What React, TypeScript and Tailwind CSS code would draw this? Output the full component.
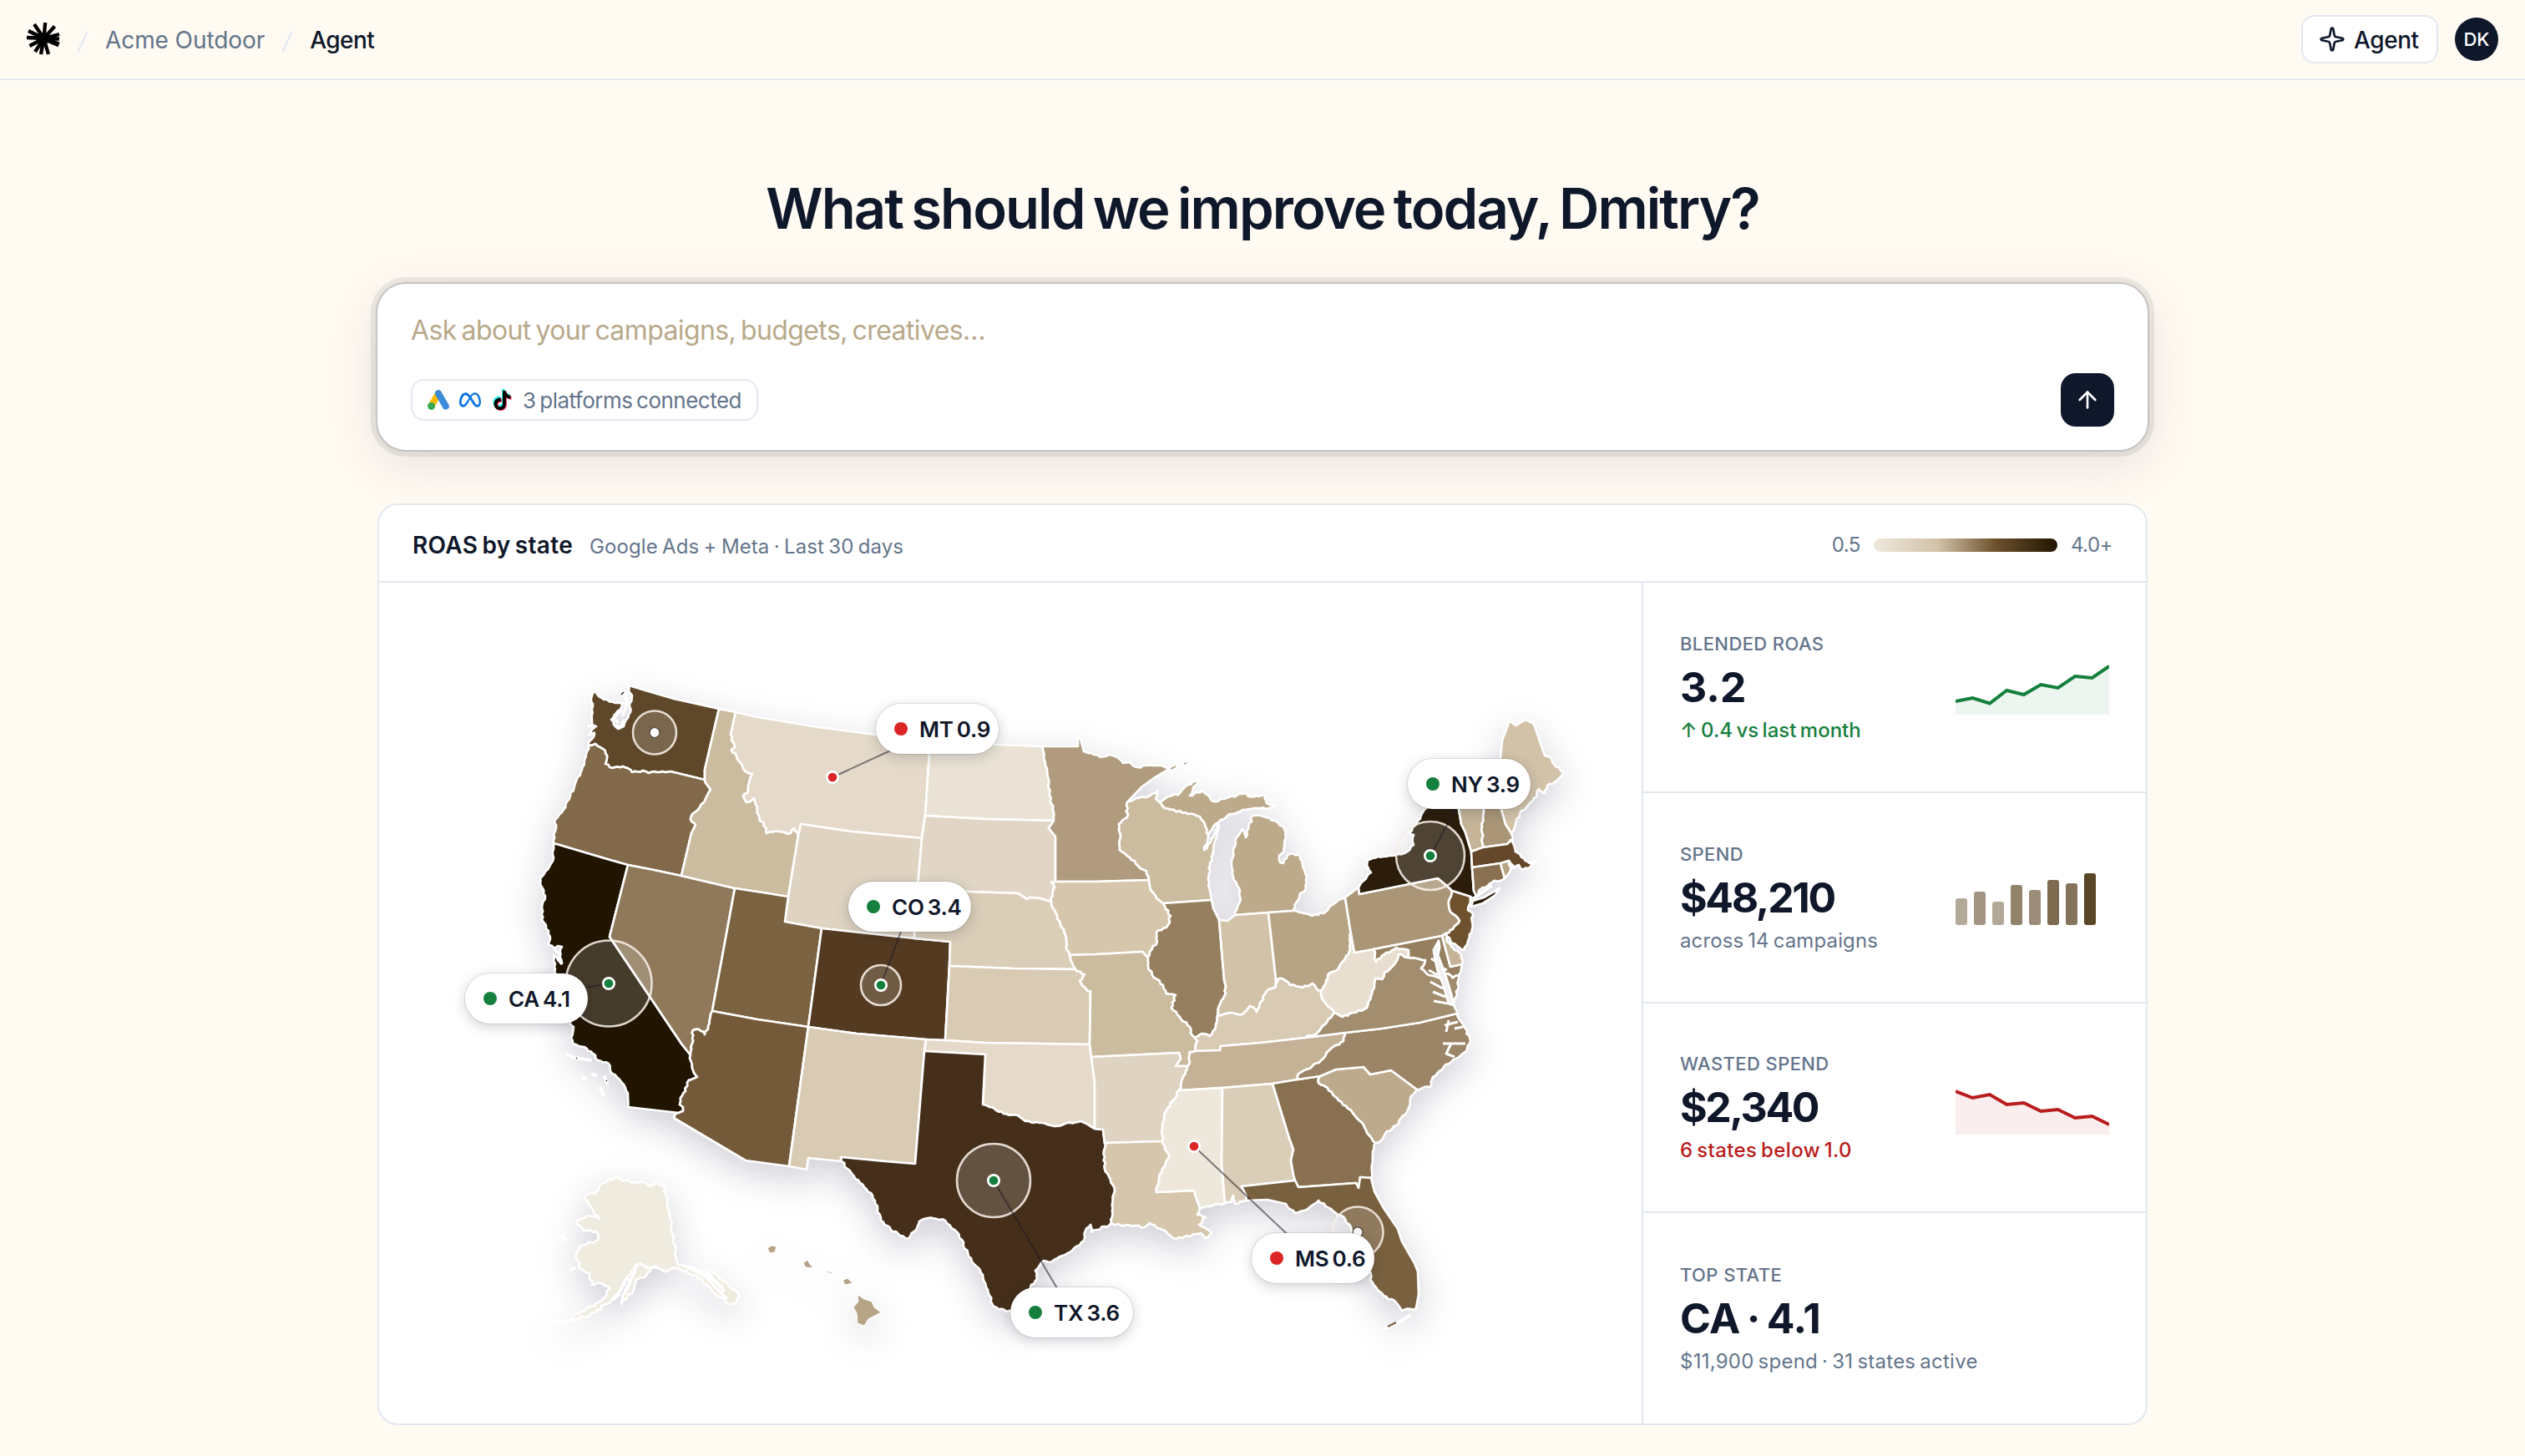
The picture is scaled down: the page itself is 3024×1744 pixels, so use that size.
import { ArrowUp, Sparkle } from "lucide-react";
import { SiMeta, SiTiktok } from "react-icons/si";

type Point = [number, number];

// Border segments between states. A leading "~" marks a river or a coast line.
const ARCS: Record<string, string> = {
  waSea:
    "~753,821 753,828 757,833 754,843 755,853 750,862 747,870 740,873 735,868 732,862 743,850 746,842 737,842 727,838 717,834 711,828 708,837 710,843 709,867 714,870 707,877 712,879 707,887 705,893",
  waOr: "~705,893 713,891 722,897 727,905 725,915 733,920 746,918 755,922 757,925 770,923 777,926 787,925 803,924",
  waOr2: "803,924 844,934",
  waId: "861,849 844,922 844,934",
  waNorth: "753,821 773,827 807,837 861,849",
  orSea: "~705,893 703,900 697,922 683,953 673,973 664,985 666,992 663,1000 663,1010",
  orCa: "663,1010 690,1018 727,1029 752,1036",
  orNv: "752,1036 783,1042 816,1049",
  orId: "~844,934 846,939 851,946 845,957 838,967 832,973 827,981 833,988 828,998",
  orId2: "828,998 816,1049",
  idNorth: "861,849 881,853",
  idMt1: "881,853 875,880",
  idMt: "~875,880 880,895 876,898 882,905 888,915 893,924 901,927 897,938 895,950 890,953 894,961 903,956 907,970 910,983 915,986 918,998 927,996 940,997 947,998 951,992 956,1001",
  idWy: "956,1001 944,1074",
  idUt: "944,1074 913,1069 880,1064",
  idNv: "880,1064 816,1049",
  caSea:
    "~663,1010 663,1027 658,1038 647,1052 647,1058 653,1073 649,1088 649,1102 657,1115 659,1125 657,1132 664,1136 668,1133 673,1134 671,1142 673,1154 667,1147 663,1144 664,1158 666,1167 676,1190 683,1227 687,1230 684,1243 686,1250 700,1254 710,1262 716,1270 729,1274 731,1283 742,1293 749,1303 752,1313 752,1326",
  caSouth: "752,1326 813,1333",
  caAz: "~813,1333 818,1331 818,1326 814,1323 815,1315 821,1307 823,1297 828,1293 835,1290 830,1282 828,1272 826,1267 827,1264",
  caNv: "752,1036 730,1122 816,1250 827,1264",
  nvUt: "880,1064 853,1211",
  nvAz: "~853,1211 848,1233 844,1239 837,1233 830,1234 829,1250 827,1264",
  utWy: "944,1074 940,1104 984,1112",
  utCo: "984,1112 968,1230",
  utAz: "853,1211 907,1221 968,1230",
  azNm: "968,1230 945,1397",
  azSouth: "813,1333 809,1334 807,1339 893,1390 945,1397",
  nmSouth: "945,1397 966,1401 968,1387 1008,1391",
  nmTx: "1008,1391 1007,1386 1060,1391 1096,1394 1107,1259",
  nmOk: "1107,1259 1109,1245",
  nmCo: "968,1230 1026,1238 1109,1245",
  coWy: "984,1112 1030,1117 1095,1124",
  coNe: "1095,1124 1138,1128 1137,1157",
  coKs: "1137,1157 1132,1246",
  coOk: "1109,1245 1132,1246",
  mtWy: "956,1001 959,987 1020,996 1104,1004",
  wySd: "1104,1004 1099,1063",
  wyNe: "1099,1063 1095,1124",
  mtNorth: "881,853 907,859 980,871 1048,880 1115,886",
  mtNd: "1115,886 1113,903 1108,977",
  mtSd: "1108,977 1104,1004",
  ndNorth: "1115,886 1193,892 1249,894",
  ndMn: "~1249,894 1252,917 1256,933 1257,953 1262,973 1262,983",
  ndSd: "1108,977 1180,981 1262,983",
  sdMn: "1262,983 1256,992 1264,1002 1264,1056",
  sdIa: "~1264,1056 1259,1057 1263,1063 1259,1080",
  sdNe: "1099,1063 1160,1068 1219,1070 1230,1077 1233,1075 1245,1076 1259,1080",
  neIa: "~1259,1080 1263,1090 1270,1107 1277,1123 1278,1138 1281,1144",
  neMo: "~1281,1144 1284,1153 1288,1161",
  neKs: "1137,1157 1213,1160 1288,1161",
  ksMo: "~1288,1161 1299,1167 1293,1175 1301,1185 1306,1187",
  ksMo2: "1306,1187 1305,1251",
  ksOk: "1132,1246 1180,1249 1305,1251",
  okMo: "1305,1251 1307,1266",
  okAr: "1307,1266 1311,1297 1311,1352",
  okTx1: "1107,1259 1180,1263 1177,1323",
  okTx: "~1177,1323 1185,1326 1193,1330 1202,1334 1219,1336 1228,1343 1245,1345 1265,1349 1278,1345 1294,1343 1306,1349 1311,1352",
  txAr: "1311,1352 1321,1353 1323,1369",
  txLa: "~1323,1369 1323,1400 1330,1413 1335,1427 1332,1443 1332,1458 1329,1467",
  txSea:
    "~1329,1467 1314,1473 1307,1476 1306,1467 1300,1474 1298,1486 1284,1498 1256,1512 1250,1510 1245,1516 1240,1522 1242,1532 1234,1542 1228,1560 1222,1575 1212,1572",
  txMex:
    "~1008,1391 1015,1400 1030,1417 1045,1432 1051,1448 1055,1462 1067,1473 1087,1484 1095,1475 1101,1463 1111,1459 1132,1462 1143,1473 1152,1485 1160,1505 1177,1527 1183,1545 1190,1565 1212,1572",
  mnNorth:
    "1249,894 1291,894 1291,884 1294,885 1298,900",
  mnNorth2: "~1298,900 1310,904 1318,907 1328,904 1338,907 1345,914 1353,913 1362,919 1373,917 1385,917 1402,920",
  mnLake: "1402,920 1382,932 1368,942 1350,961",
  mnWi: "~1350,961 1350,979 1340,987 1342,1000 1341,1018 1353,1027 1363,1037 1373,1043 1376,1054",
  mnIa: "1264,1056 1313,1056 1376,1054",
  wiLake: "~1350,961 1364,956 1377,953 1387,947 1384,957 1390,962",
  wiMi: "~1390,962 1395,968 1423,975 1437,978 1443,987 1447,1000",
  wiSea: "~1447,1000 1446,1008 1442,1018 1450,1009 1455,998 1459,985 1460,990 1456,1005 1453,1020 1449,1037 1447,1053 1451,1078",
  wiIl: "1451,1078 1393,1082",
  wiIa: "~1376,1054 1379,1067 1388,1078 1393,1082",
  iaIl: "~1393,1082 1402,1097 1399,1108 1385,1117 1386,1128 1377,1140 1375,1147",
  iaMo: "1281,1144 1313,1143 1368,1140 1375,1147",
  moIl: "~1375,1147 1375,1157 1380,1168 1393,1180 1397,1190 1408,1192 1403,1207 1413,1218 1425,1230 1428,1240 1431,1243",
  ilKy: "~1431,1243 1440,1238 1449,1241 1456,1230 1458,1217",
  ilIn: "1460,1102 1466,1173",
  ilIn2: "~1466,1173 1468,1190 1460,1205 1458,1217",
  ilLake: "1451,1078 1453,1088 1460,1102",
  inLake: "1460,1102 1470,1103 1479,1096",
  inMi: "1479,1096 1519,1093",
  inOh: "1519,1093 1528,1173 1528,1182",
  inKy: "~1458,1217 1473,1213 1488,1215 1497,1205 1505,1212 1510,1200 1517,1187 1528,1182",
  miSea:
    "~1479,1096 1485,1080 1485,1067 1477,1050 1475,1037 1477,1017 1481,1003 1488,993 1492,1003 1495,993 1500,977 1510,977 1527,983 1537,990 1540,1003 1538,1020 1532,1025 1533,1033 1537,1034 1542,1024 1555,1023 1560,1035 1565,1050 1564,1065 1557,1070 1553,1080 1548,1091",
  miOh: "1519,1093 1548,1091",
  miUpper:
    "~1390,962 1395,957 1413,950 1423,940 1435,933 1425,953 1440,947 1453,960 1472,955 1492,950 1495,954 1515,953 1517,962 1528,965 1520,968 1502,968 1488,970 1470,977 1462,982 1453,990 1447,1000",
  ohLake: "~1548,1091 1558,1093 1572,1097 1588,1092 1597,1083 1611,1075",
  ohPa: "1611,1075 1617,1113",
  ohWv: "~1617,1113 1617,1123 1616,1140 1607,1153 1600,1163 1590,1168 1588,1178 1582,1187",
  ohKy: "~1528,1182 1530,1173 1537,1173 1545,1180 1560,1183 1572,1178 1577,1185 1582,1187",
  paLake: "1611,1075 1627,1063",
  paNy: "1627,1063 1628,1071 1722,1052 1728,1057 1735,1063 1739,1067",
  paNj: "~1739,1067 1735,1080 1737,1092 1748,1103 1740,1113 1732,1118",
  paDe: "1732,1118 1727,1121",
  paMd: "1727,1121 1645,1137",
  paWv: "1645,1137 1622,1141 1617,1113",
  nyLake:
    "~1627,1063 1642,1045 1637,1037 1638,1030 1650,1026 1667,1025 1682,1022 1693,1012 1693,1000 1688,997 1698,983 1708,968 1720,957 1745,951",
  nyVt: "1745,951 1747,969 1750,987 1755,997 1762,1020",
  nyMa: "1762,1020 1763,1039",
  nyCt: "1763,1039 1765,1067 1768,1073",
  nySea: "1768,1073 1764,1076 1761,1074",
  nyNj: "1739,1067 1761,1074",
  njSea: "~1761,1074 1760,1083 1758,1090 1763,1093 1763,1113 1758,1127 1753,1138 1745,1133 1737,1127 1732,1118",
  deSea: "~1732,1118 1733,1128 1742,1138 1750,1143 1751,1155",
  deMd: "1727,1121 1737,1158 1751,1155",
  mdSea: "~1751,1155 1750,1160 1747,1168",
  mdVa: "~1747,1168 1740,1171 1734,1166 1727,1172 1712,1168 1702,1160 1707,1150 1697,1148 1686,1147",
  mdWv: "~1645,1137 1648,1152 1658,1143 1672,1135 1687,1138 1686,1147",
  wvVa: "~1686,1147 1675,1143 1672,1152 1665,1160 1658,1165 1655,1173 1647,1172 1643,1190 1637,1207 1620,1213 1608,1218 1598,1213",
  wvKy: "~1582,1187 1583,1195 1590,1205 1598,1213",
  kyVa: "~1598,1213 1587,1227 1577,1238 1563,1243",
  kyTn: "1431,1259 1461,1258 1462,1253 1510,1249 1563,1243",
  kyMo: "~1431,1243 1434,1247 1431,1259",
  moTn: "~1431,1259 1425,1260 1425,1272 1422,1277",
  vaTn: "1563,1243 1611,1237",
  vaNc: "1611,1237 1655,1232 1700,1225 1745,1214",
  vaSea: "~1747,1168 1746,1185 1741,1201 1738,1190 1734,1196 1742,1205 1745,1214",
  ncSea: "~1745,1214 1755,1232 1761,1247 1755,1260 1744,1268 1729,1278 1716,1290 1713,1302 1697,1305",
  ncSc: "1697,1305 1666,1282 1641,1287 1633,1278 1600,1281 1581,1289",
  ncGa: "1581,1289 1554,1293",
  ncTn: "~1611,1237 1609,1247 1592,1258 1585,1268 1572,1277 1562,1282 1554,1288 1554,1293",
  tnGa: "1554,1293 1524,1298",
  tnAl: "1524,1298 1464,1303",
  tnMs: "1464,1303 1412,1306",
  tnAr: "~1422,1277 1416,1292 1412,1306",
  moAr: "1307,1266 1412,1261 1414,1268 1408,1277 1422,1277",
  arMs: "~1412,1306 1401,1325 1395,1333 1392,1348 1392,1367",
  arLa: "1323,1369 1392,1367",
  laMs: "~1392,1367 1395,1373 1400,1387 1392,1400 1388,1413 1385,1428",
  laMs2: "1385,1428 1430,1426 1432,1433 1437,1447",
  laSea:
    "~1437,1447 1434,1455 1444,1458 1436,1467 1451,1477 1444,1483 1438,1477 1416,1483 1405,1483 1392,1473 1377,1465 1371,1470 1349,1467 1329,1467",
  msSea: "~1437,1447 1449,1445 1467,1441",
  msAl: "1464,1303 1463,1393 1467,1441",
  alSea: "~1467,1441 1475,1440 1477,1432 1479,1442 1492,1438",
  alFl: "1492,1438 1493,1433 1487,1421 1551,1414",
  alGa: "1524,1298 1544,1363 1549,1377 1546,1390 1549,1407 1551,1414",
  gaFl: "1551,1414 1555,1422 1624,1417 1627,1423 1629,1410 1642,1411",
  gaSc: "~1581,1289 1579,1297 1590,1303 1603,1318 1620,1333 1633,1347 1640,1360 1647,1369",
  gaSea: "~1647,1369 1644,1383 1642,1411",
  scSea: "~1697,1305 1690,1313 1685,1332 1672,1348 1659,1358 1653,1367 1647,1369",
  flEast: "1642,1411 1646,1427 1657,1447 1674,1472 1679,1487 1694,1513 1698,1523 1699,1550 1696,1567",
  flWest:
    "~1696,1567 1679,1570 1672,1560 1657,1552 1648,1542 1641,1533 1641,1523 1630,1505 1620,1485 1618,1470 1611,1460 1594,1448 1579,1438 1562,1450 1551,1453 1540,1442",
  flPan: "1540,1442 1518,1437 1492,1438",
  vtTop: "1745,951 1776,948",
  vtNh: "~1776,948 1777,970 1775,990 1776,1015",
  vtMa: "1762,1020 1776,1015",
  nhTop: "1776,948 1790,942",
  nhMa: "1776,1015 1805,1011",
  nhMe: "1790,942 1798,969 1803,987 1810,998",
  nhSea: "1810,998 1812,1005 1805,1011",
  meTop: "1790,942 1797,907",
  meLand: "1797,907 1799,887 1808,863 1815,869 1827,862 1837,867 1850,905",
  meSea:
    "~1850,905 1858,908 1863,918 1873,925 1865,935 1853,941 1850,950 1843,945 1840,955 1833,961 1820,975 1815,987 1810,998",
  maSea: "~1805,1011 1809,1006 1813,1012 1815,1020 1825,1028 1832,1034 1839,1031 1833,1038 1824,1042 1819,1036 1813,1040 1807,1031",
  maCt: "1763,1039 1797,1034",
  maRi: "1797,1034 1807,1031",
  ctRi: "1797,1034 1802,1052",
  ctSea: "~1802,1052 1787,1057 1773,1065 1768,1073",
  riSea: "~1807,1031 1809,1043 1802,1052",
};

const STATES: [fill: string, arcs: string][] = [
  ["#5f4829", "waSea waOr waOr2 waId waNorth"],
  ["#82694a", "orSea orCa orNv orId2 orId waOr2 waOr"],
  ["#211500", "caSea caSouth caAz caNv orCa"],
  ["#8f795a", "caNv nvAz nvUt idNv orNv"],
  ["#cbbb9f", "idNorth idMt1 idMt idWy idUt idNv orId2 orId waId"],
  ["#e5dac9", "mtNorth mtNd mtSd mtWy idMt idMt1"],
  ["#dfd3c1", "mtWy wySd wyNe coWy utWy idWy"],
  ["#7b6240", "idUt utWy utCo utAz nvUt"],
  ["#543a20", "coWy coNe coKs coOk nmCo utCo"],
  ["#745a39", "utAz azNm azSouth caAz nvAz"],
  ["#d8cab3", "nmCo nmOk nmTx nmSouth azNm"],
  ["#eae3d5", "ndNorth ndMn ndSd mtNd"],
  ["#e1d6c5", "ndSd sdMn sdIa sdNe wySd mtSd"],
  ["#dbceb8", "sdNe neIa neMo neKs coNe wyNe"],
  ["#d8cab3", "neKs ksMo ksMo2 ksOk coKs"],
  ["#e5dac9", "coOk ksOk okMo okAr okTx okTx1 nmOk"],
  ["#452f1a", "okTx1 okTx txAr txLa txSea txMex nmTx"],
  ["#b09b7e", "mnNorth mnNorth2 mnLake mnWi mnIa sdMn ndMn"],
  ["#d5c6ac", "mnIa wiIa iaIl iaMo neIa sdIa"],
  ["#cbbb9f", "iaMo moIl kyMo moTn moAr okMo ksMo2 ksMo neMo"],
  ["#dfd3c1", "moAr tnAr arMs arLa txAr okAr"],
  ["#d5c6ac", "arLa laMs laMs2 laSea txLa"],
  ["#cbbb9f", "wiLake wiMi wiSea wiIl wiIa mnWi"],
  ["#bdaa8a", "miUpper wiMi"],
  ["#bdaa8a", "miSea miOh inMi"],
  ["#957f5f", "wiIl ilLake ilIn ilIn2 ilKy moIl iaIl"],
  ["#d2c2a8", "inLake inMi inOh inKy ilIn2 ilIn"],
  ["#b7a485", "miOh ohLake ohPa ohWv ohKy inOh"],
  ["#d8cab3", "inKy ohKy wvKy kyVa kyTn kyMo ilKy"],
  ["#c5b196", "kyTn vaTn ncTn tnGa tnAl tnMs tnAr moTn"],
  ["#eee8dc", "tnMs msAl msSea laMs2 laMs arMs"],
  ["#dbceb8", "tnAl alGa alFl alSea msAl"],
  ["#897050", "tnGa ncGa gaSc gaSea gaFl alGa"],
  ["#79603e", "alFl gaFl flEast flWest flPan"],
  ["#bdaa8d", "ncSc scSea gaSc"],
  ["#9c8467", "vaNc ncSea ncSc ncGa ncTn"],
  ["#a28d6f", "wvVa mdVa vaSea vaNc vaTn kyVa"],
  ["#e8dfd0", "paWv mdWv wvVa wvKy ohWv"],
  ["#aa9677", "paLake paNy paNj paDe paMd paWv ohPa"],
  ["#957f5f", "paMd deMd mdSea mdVa mdWv"],
  ["#c5b498", "paDe deSea deMd"],
  ["#2c1d0b", "nyLake nyVt nyMa nyCt nySea nyNj paNy"],
  ["#6e522e", "nyNj njSea paNj"],
  ["#c5b498", "vtTop vtNh vtMa nyVt"],
  ["#aa9677", "nhTop nhMe nhSea nhMa vtNh"],
  ["#d2c2a8", "meTop meLand meSea nhMe"],
  ["#65482a", "vtMa nhMa maSea maRi maCt nyMa"],
  ["#897050", "maCt ctRi ctSea nyCt"],
  ["#b7a485", "maRi riSea ctRi"],
];

const ALASKA =
  "740,1411 757,1417 768,1416 781,1420 788,1418 794,1420 797,1430 812,1515 822,1517 839,1525 850,1520 860,1530 874,1542 885,1550 882,1560 874,1562 861,1553 848,1540 835,1528 811,1519 796,1523 783,1518 774,1528 761,1533 758,1546 750,1556 744,1562 748,1545 756,1530 764,1514 752,1528 744,1545 736,1556 726,1562 713,1572 692,1580 682,1581 690,1574 709,1565 722,1556 731,1543 718,1537 709,1539 706,1525 695,1520 690,1503 696,1492 716,1485 714,1475 698,1473 690,1463 703,1456 718,1460 709,1448 700,1435 703,1430 713,1430 718,1420 731,1413";

const HAWAII = [
  "919,1495 924,1492 930,1493 928,1500 922,1501",
  "967,1509 970,1514 974,1519 965,1518 962,1513",
  "988,1523 994,1523 1000,1525 993,1525",
  "995,1532 998,1533 997,1535",
  "1005,1529 1009,1534 1015,1531 1021,1537 1012,1539 1010,1535",
  "1027,1551 1035,1556 1044,1559 1047,1566 1055,1572 1040,1580 1035,1588 1027,1585 1026,1573 1022,1566 1028,1559",
];

const ISLANDS = [
  "679,1263 686,1266",
  "688,1267 694,1268",
  "697,1268 707,1270",
  "698,1291 701,1292",
  "710,1287 713,1288",
  "724,1290 727,1297",
  "719,1303 723,1311",
  "744,829 747,832",
  "672,1480 678,1485",
  "683,1521 688,1519",
  "658,1588 668,1584 678,1583",
  "1660,1591 1672,1586 1688,1576",
];

// Narrow water with shores on both sides, drawn as plain white strokes
const INLETS =
  "M744 826L750 838L749 850L745 858M745 850L735 860L741 866M748 862L742 872L736 868M750 830L752 846M664 1138L671 1143L669 1150L673 1155M703 870L711 869M704 880L713 878M818 1516L832 1522L846 1530L858 1543L871 1556M826 1517L842 1524L856 1534L868 1547M846 1521L856 1534L866 1542M766 1513L776 1519L788 1517M750 1530L743 1546L732 1558M760 1522L754 1538L748 1550M1787 1061L1773 1070L1766 1076";

const parse = (text: string) =>
  text
    .replace("~", "")
    .split(" ")
    .map((pair) => pair.split(",").map(Number) as Point);

const noise = (x: number, y: number) => {
  const n = Math.sin(x * 12.9898 + y * 78.233) * 43758.5453;
  return n - Math.floor(n) - 0.5;
};

// Breaks every segment in short steps and shifts them a little sideways
const roughen = (points: Point[], amount: number) => {
  const result: Point[] = [points[0]];
  for (let i = 1; i < points.length; i++) {
    const [ax, ay] = points[i - 1];
    const [bx, by] = points[i];
    const length = Math.hypot(bx - ax, by - ay);
    const steps = Math.max(1, Math.round(length / 3.5));
    for (let s = 1; s < steps; s++) {
      const x = ax + ((bx - ax) * s) / steps;
      const y = ay + ((by - ay) * s) / steps;
      const shift = noise(x, y) * amount;
      result.push([x - ((by - ay) / length) * shift, y + ((bx - ax) / length) * shift]);
    }
    result.push([bx, by]);
  }
  return result;
};

const toPath = (points: Point[]) =>
  "M" + points.map(([x, y]) => `${x.toFixed(1)} ${y.toFixed(1)}`).join("L") + "Z";

const arcPoints = Object.fromEntries(
  Object.entries(ARCS).map(([name, text]) => [
    name,
    text.startsWith("~") ? roughen(parse(text), 2.6) : parse(text),
  ])
);

const gap = (a: Point, b: Point) => Math.hypot(a[0] - b[0], a[1] - b[1]);

const ringPath = (names: string) => {
  const list = names.split(" ").map((name) => arcPoints[name]);
  const ring: Point[] = [];
  list.forEach((points, i) => {
    const first = points[0];
    const last = points[points.length - 1];
    let reversed = false;
    if (i === 0) {
      const next = list[1];
      const ends = [next[0], next[next.length - 1]];
      const fromFirst = Math.min(...ends.map((end) => gap(first, end)));
      const fromLast = Math.min(...ends.map((end) => gap(last, end)));
      reversed = list.length > 2 && fromFirst < fromLast;
    } else {
      const tail = ring[ring.length - 1];
      reversed = gap(tail, last) < gap(tail, first);
    }
    ring.push(...(reversed ? [...points].reverse() : points));
  });
  return toPath(ring);
};

const statePaths = STATES.map(([fill, arcs]) => ({ fill, d: ringPath(arcs) }));

const BUBBLES = [
  { x: 784, y: 877.5, r: 26 },
  { x: 729, y: 1178, r: 51.5 },
  { x: 1055, y: 1180, r: 24 },
  { x: 1190, y: 1414, r: 44 },
  { x: 1713, y: 1025, r: 41 },
  { x: 1626, y: 1476, r: 30.5 },
];

const PINS = [
  { label: "MT 0.9", good: false, x: 997, y: 931, place: "left-[595px] top-[145px]", px: 1123, py: 873 },
  { label: "CO 3.4", good: true, x: 1055, y: 1180, place: "left-[562px] top-[358px]", px: 1090, py: 1086 },
  { label: "CA 4.1", good: true, x: 729, y: 1178, place: "left-[103px] top-[468px]", px: 630, py: 1196 },
  { label: "NY 3.9", good: true, x: 1713, y: 1025, place: "left-[1232px] top-[211px]", px: 1760, py: 939 },
  { label: "TX 3.6", good: true, x: 1190, y: 1414, place: "left-[756px] top-[844px]", px: 1283, py: 1572 },
  { label: "MS 0.6", good: false, x: 1430, y: 1373, place: "left-[1045px] top-[779px]", px: 1572, py: 1507 },
];

const UsMap = () => {
  return (
    <svg viewBox="454 698 1512 1007" className="block w-full h-full">
      <g
        className="[filter:drop-shadow(0_14px_20px_rgba(30,20,60,0.2))]"
        stroke="#ffffff"
        strokeWidth="2.7"
        strokeLinejoin="round">
        {statePaths.map(({ fill, d }, i) => (
          <path key={i} d={d} fill={fill} />
        ))}
        <path d={toPath(roughen([...parse(ALASKA), [740, 1411]], 3.4))} fill="#f0ebdf" />
        <path d="M1762 1086L1764 1079L1777 1075L1796 1064L1790 1073L1776 1082Z" fill="#2c1d0b" />
        {ISLANDS.map((line) => (
          <polyline key={line} points={line} fill="none" strokeWidth="4" strokeLinecap="round" />
        ))}
        {HAWAII.map((island) => (
          <polygon key={island} points={island} fill="#b7a485" strokeWidth="1" />
        ))}
      </g>
      <path d={INLETS} fill="none" stroke="#ffffff" strokeWidth="3.5" strokeLinejoin="round" />
      {/* bays and sounds */}
      <g fill="#f1eff3" stroke="#ffffff" strokeWidth="3" strokeLinejoin="round">
        <path d="M1723 1127L1717 1138L1719 1150L1722 1164L1728 1178L1735 1202L1741 1204L1736 1184L1731 1168L1727 1157L1722 1144L1724 1135Z" />
        <path d="M1722 1168L1711 1162M1728 1184L1713 1176M1731 1194L1716 1188M1734 1202L1717 1199M1720 1152L1714 1148M1728 1160L1733 1162" fill="none" />
        <path d="M1746 1224L1730 1228M1735 1222L1732 1236M1752 1230L1742 1232M1755 1250L1728 1250M1738 1250L1732 1262L1742 1266" fill="none" />
      </g>
      <path d="M1402 921L1408 918M1418 915L1421 914" stroke="#b09b7e" strokeWidth="1.5" />
      <path d="M744 832L747 829M690 1267L691 1268M726 1294L727 1295" stroke="#211500" strokeWidth="1.3" />
      <path d="M1662 1589L1672 1584" stroke="#79603e" strokeWidth="2" />
      {BUBBLES.map(({ x, y, r }) => (
        <circle
          key={x}
          cx={x}
          cy={y}
          r={r}
          fill="#ffffff"
          fillOpacity="0.17"
          stroke="#f7efe8"
          strokeOpacity="0.88"
          strokeWidth="2.6"
        />
      ))}
      {PINS.map(({ label, x, y, px, py }) => (
        <line key={label} x1={x} y1={y} x2={px} y2={py} stroke="#1f1a24" strokeOpacity="0.55" strokeWidth="2" />
      ))}
      {PINS.map(({ label, good, x, y }) => (
        <circle key={label} cx={x} cy={y} r="6.7" fill={good ? "#15803d" : "#dc2626"} stroke="#ffffff" strokeWidth="2.7" />
      ))}
      <circle cx="784" cy="877.5" r="6" fill="#ffffff" stroke="#4b4640" strokeWidth="1.2" />
      <circle cx="1626" cy="1476" r="6" fill="#ffffff" stroke="#4b4640" strokeWidth="1.2" />
    </svg>
  );
};

const Logo = () => {
  return (
    <svg viewBox="0 0 40 40" className="w-10 h-10" stroke="#000000" strokeWidth="4.3" fill="none">
      <path d="M20.5 19L22.2 0M20.5 19L33.5 4.5M20.5 19L39 14M20.5 19L39 19.5M20.5 19L26 38M20.5 19L17 38M20.5 19L10 35M20.5 19L3.5 28M20.5 19L0 18M20.5 19L2 10M20.5 19L9 2" />
      <path d="M22 19.5L38.5 26.5" strokeWidth="6" />
      <circle cx="20.5" cy="19" r="7" fill="#000000" stroke="none" />
    </svg>
  );
};

const Slash = () => {
  return (
    <svg viewBox="0 0 14 28" className="w-3.5 h-7 mt-1.5" stroke="#e2e8f0" strokeWidth="2.2">
      <path d="M1.5 26.5L12.5 1.5" />
    </svg>
  );
};

const GoogleAds = () => {
  return (
    <svg viewBox="0 0 26 24" className="w-[26px] h-6" strokeLinecap="round">
      <path d="M13 4.5L4.6 19" stroke="#fbbc04" strokeWidth="8" />
      <path d="M13 4.2L21.8 19.6" stroke="#3c8bd9" strokeWidth="8" />
      <circle cx="4.6" cy="19.4" r="4.5" fill="#34a853" />
    </svg>
  );
};

const TikTok = () => {
  return (
    <span className="relative w-[26px] h-[26px]">
      <SiTiktok size={23} color="#25f4ee" className="absolute left-[1px] top-0" />
      <SiTiktok size={23} color="#fe2c55" className="absolute left-[3px] top-[3px]" />
      <SiTiktok size={23} color="#000000" className="absolute left-[2px] top-[1.5px]" />
    </span>
  );
};

const Trend = ({ values, color }: { values: number[]; color: string }) => {
  const points = values.map((y, i) => `${(i * 184) / 9},${y}`).join(" ");
  return (
    <svg viewBox="0 0 184 66" className="w-[184px] h-[66px]">
      <polygon points={`0,66 ${points} 184,66`} fill={color} fillOpacity="0.08" />
      <polyline points={points} fill="none" stroke={color} strokeWidth="4" />
    </svg>
  );
};

const BARS = [
  { height: "h-8", color: "bg-[#b3a998]" },
  { height: "h-10", color: "bg-[#a39584]" },
  { height: "h-7", color: "bg-[#b3a998]" },
  { height: "h-12", color: "bg-[#93836d]" },
  { height: "h-[42px]", color: "bg-[#9c8d7a]" },
  { height: "h-[54px]", color: "bg-[#7d6a4f]" },
  { height: "h-[50px]", color: "bg-[#85735a]" },
  { height: "h-[62px]", color: "bg-[#5a4527]" },
];

const Bars = () => {
  return (
    <div className="flex items-end gap-2 w-[184px] h-[66px]">
      {BARS.map(({ height, color }, i) => (
        <div key={i} className={`w-3.5 rounded-[3px] ${height} ${color}`}></div>
      ))}
    </div>
  );
};

const STATS = [
  {
    title: "BLENDED ROAS",
    value: "3.2",
    valueStyle: "tracking-normal",
    note: "↑ 0.4 vs last month",
    noteStyle: "text-[#15803d] font-medium",
    chart: <Trend color="#15803d" values={[50, 46, 52.5, 37, 42, 30, 34, 20, 22, 8]} />,
  },
  {
    title: "SPEND",
    value: "$48,210",
    valueStyle: "tracking-[-0.048em]",
    note: "across 14 campaigns",
    noteStyle: "text-[#64748b] tracking-[0.005em]",
    chart: <Bars />,
  },
  {
    title: "WASTED SPEND",
    value: "$2,340",
    valueStyle: "tracking-[-0.048em]",
    note: "6 states below 1.0",
    noteStyle: "text-[#b91c1c] font-medium tracking-[0.015em]",
    chart: <Trend color="#b91c1c" values={[14, 22, 18, 30, 28, 38, 36, 46, 44, 54]} />,
  },
  {
    title: "TOP STATE",
    value: "CA · 4.1",
    valueStyle: "tracking-[-0.01em] [word-spacing:-0.07em]",
    note: "$11,900 spend · 31 states active",
    noteStyle: "text-[#64748b] tracking-[0.01em]",
    chart: null,
  },
];

const Header = () => {
  return (
    <header className="flex items-center justify-between h-24 px-8 border-b-2 border-[#e2e8f0] text-[28px]">
      <div className="flex items-center gap-5">
        <Logo />
        <Slash />
        <span className="pt-0.5 tracking-[-0.003em] text-[#64748b]">Acme Outdoor</span>
        <Slash />
        <span className="pt-0.5 font-medium tracking-[-0.02em] text-[#0f172a]">Agent</span>
      </div>
      <div className="flex items-center gap-5">
        <div className="flex items-center gap-2.5 h-[58px] w-[164px] pl-[19px] rounded-2xl border-2 border-[#e2e8f0] bg-white text-[#0f172a]">
          <Sparkle size={32} strokeWidth={2} />
          <span className="pt-0.5 font-medium tracking-[-0.015em]">Agent</span>
        </div>
        <div className="flex items-center justify-center w-[52px] h-[52px] rounded-full bg-[#0f172a] text-white text-[22px] font-medium">
          DK
        </div>
      </div>
    </header>
  );
};

const Prompt = () => {
  return (
    <div className="flex flex-col justify-between w-[2124px] h-[203px] mt-[46px] px-10 pt-9 pb-7 rounded-[36px] border-2 border-[#c4c3c0] bg-white shadow-[0_0_0_6px_rgba(15,15,15,0.07),0_16px_60px_rgba(15,23,42,0.1)]">
      <div className="text-[32px] leading-10 tracking-[-0.019em] [word-spacing:-0.08em] text-[#b8a98a]">
        Ask about your campaigns, budgets, creatives…
      </div>
      <div className="flex items-center justify-between">
        <div className="flex items-center gap-3 h-[50px] w-[416px] pl-[18px] rounded-2xl border-2 border-[#e2e8f0]">
          <GoogleAds />
          <SiMeta size={26} color="#0a74e6" />
          <TikTok />
          <span className="text-[26px] tracking-[-0.02em] [word-spacing:-0.08em] text-[#64748b] whitespace-nowrap">
            3 platforms connected
          </span>
        </div>
        <div className="flex items-center justify-center w-16 h-16 rounded-[18px] bg-[#0f172a] text-white">
          <ArrowUp size={32} strokeWidth={2} />
        </div>
      </div>
    </div>
  );
};

const Report = () => {
  return (
    <section className="flex flex-col w-[2120px] h-[1104px] mt-[62px] rounded-3xl border-2 border-[#e2e8f0] bg-white overflow-hidden">
      <div className="flex items-center justify-between h-[93px] px-10 pt-1 border-b-2 border-[#e2e8f0]">
        <div className="flex items-baseline gap-5">
          <span className="text-[28px] font-semibold [word-spacing:-0.08em] tracking-[0.012em] text-[#0f172a]">
            ROAS by state
          </span>
          <span className="text-2xl [word-spacing:-0.06em] tracking-[0.003em] text-[#64748b]">Google Ads + Meta · Last 30 days</span>
        </div>
        <div className="flex items-center gap-4 text-2xl tracking-[-0.02em] text-[#64748b]">
          <span>0.5</span>
          <div className="w-[220px] h-4 rounded-full bg-[linear-gradient(90deg,#eee8dc_0%,#d2c2a8_35%,#6e522e_66%,#211500_100%)]"></div>
          <span>4.0+</span>
        </div>
      </div>
      <div className="flex flex-1 min-h-0">
        <div className="relative w-[1512px] h-full">
          <UsMap />
          {PINS.map(({ label, good, place }) => (
            <div
              key={label}
              className={`absolute flex items-center gap-3.5 w-[147px] h-[60px] pl-[22px] rounded-full bg-white shadow-[0_0_0_1px_rgba(15,23,42,0.1),0_4px_16px_rgba(15,23,42,0.2)] ${place}`}>
              <span className={`shrink-0 w-4 h-4 rounded-full ${good ? "bg-[#15803d]" : "bg-[#dc2626]"}`}></span>
              <span className="text-[26px] font-semibold tracking-[-0.01em] [word-spacing:-0.08em] text-[#0f172a] whitespace-nowrap">
                {label}
              </span>
            </div>
          ))}
        </div>
        <div className="grid flex-1 grid-rows-4 border-l-2 border-[#e2e8f0] divide-y-2 divide-[#e2e8f0]">
          {STATS.map(({ title, value, valueStyle, note, noteStyle, chart }) => (
            <div key={title} className="flex items-center justify-between px-11">
              <div>
                <div className="text-[22px] leading-8 font-medium tracking-[0.018em] text-[#64748b]">{title}</div>
                <div className={`my-1.5 text-[50px] leading-[60px] font-bold text-[#0f172a] ${valueStyle}`}>{value}</div>
                <div className={`text-2xl leading-8 [word-spacing:-0.08em] whitespace-nowrap ${noteStyle}`}>{note}</div>
              </div>
              {chart}
            </div>
          ))}
        </div>
      </div>
    </section>
  );
};

export default function App() {
  return (
    <div className="w-[3024px] h-[1744px] overflow-hidden bg-[#fffaf2] font-['Inter',sans-serif]">
      <Header />
      <main className="flex flex-col items-center">
        <h1 className="mt-[112px] text-[67px] leading-[84px] font-semibold tracking-[-0.029em] [word-spacing:-0.07em] text-[#0f172a]">
          What should we improve today, Dmitry?
        </h1>
        <Prompt />
        <Report />
      </main>
    </div>
  );
}
